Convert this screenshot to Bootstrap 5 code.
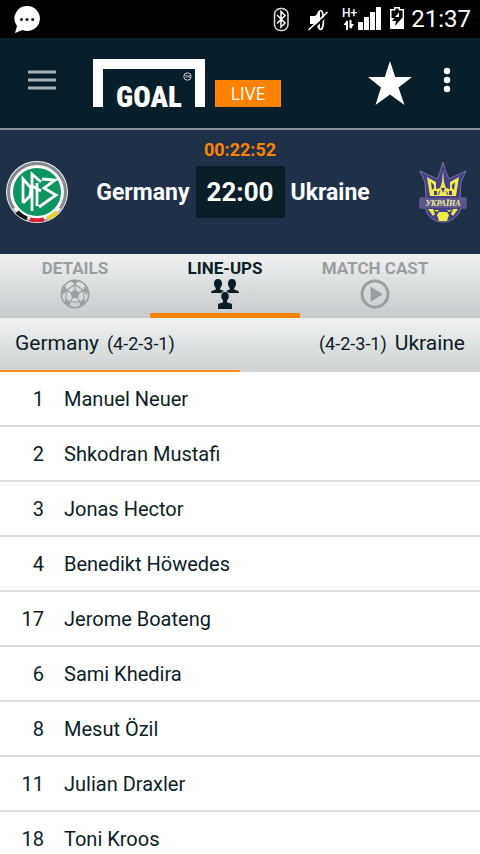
<!DOCTYPE html>
<html lang="en">
<head>
<meta charset="utf-8">
<meta name="viewport" content="width=device-width, initial-scale=1">
<title>Goal Live – Line-ups</title>
<link href="https://cdn.jsdelivr.net/npm/bootstrap@5.3.0/dist/css/bootstrap.min.css" rel="stylesheet">
<style>
  body { font-family: Roboto, "Noto Sans", sans-serif; color: #0a1e28; background: #fff; }
  svg { display: block; flex: none; }
  button { font: inherit; }
  .status-bar { height: 38px; background: #000; padding: 0 9px 0 14px; }
  .status-icons { gap: 6px; }
  .clock { font-size: 24px; line-height: 38px; }
  .app-bar { height: 92px; background: #081e2a; border-bottom: 2px solid #8b9299; padding: 0 25px 6px 28px; }
  .icon-btn { background: none; border: 0; padding: 0; color: #fff; }
  .fav { margin-right: 27px; }
  .brand { color: #fff; margin-left: 37px; gap: 10px; margin-top: 6px; }
  .goal-frame { width: 112px; height: 48px; border: 10px solid #fff; border-bottom: 0; position: relative; }
  .goal-word { font-family: "Roboto Condensed", Roboto, sans-serif; font-weight: 900; font-size: 29px; line-height: 20px; }
  .live-tag { background: #ff8200; font-family: "Open Sans", sans-serif; font-size: 18px; line-height: 27px; width: 66px; }
  .match { background: #1e3149; padding: 8px 6px 31px; }
  .timer { color: #ff8200; font-weight: 700; font-size: 18px; line-height: 23px; }
  .team { flex: 1 1 0; font-weight: 700; font-size: 23px; line-height: 28px; padding: 2px 6px 0; }
  .score { background: #0a1e28; width: 89px; font-weight: 700; font-size: 26px; line-height: 52px; }
  .tabs { background: linear-gradient(#eff1f1, #c6cacc); height: 64px; }
  .tab { flex: 0 0 150px; background: none; border: 0; border-bottom: 5px solid transparent; padding: 4px 0 0; color: #9b9fa1; font-weight: 700; font-size: 17px; line-height: 21px; }
  .tab.active { color: #0a1e28; border-color: #ff8200; }
  .sides { background: linear-gradient(#f0f2f2, #cdd1d2); }
  .side { background: none; border: 0; border-bottom: 2px solid #d4d6d7; padding: 0 15px; font-size: 21px; line-height: 51px; height: 54px; color: #0a1e28; gap: 8px; }
  .side.active { border-color: #ff8c1a; }
  .formation { font-size: 18px; }
  .list-group-flush > .player { height: 55px; border: 0; border-bottom: 2px solid #dcdcdc; padding: 0; gap: 20px; font-size: 20px; line-height: 55px; color: #0a1e28; }
  .shirt { width: 44px; }
</style>
</head>
<body>
<div class="vh-100 d-flex flex-column overflow-hidden">
  <div class="status-bar d-flex align-items-center justify-content-between text-white flex-shrink-0">
    <svg width="26" height="27" viewBox="0 0 26 27" aria-hidden="true"><path fill="#fff" d="M13.500 0a12.500 12.500 0 1 1-5 24L1 27l2-7A12.500 12.500 0 0 1 13.500 0z"/><g fill="#111"><circle cx="7.500" cy="13.500" r="1.500"/><circle cx="13" cy="13.500" r="1.500"/><circle cx="18.700" cy="13.500" r="1.500"/></g></svg>
    <div class="status-icons d-flex align-items-center">
      <svg width="110" height="38" viewBox="272 0 110 38" aria-hidden="true">
        <rect x="273.500" y="8.500" width="13.500" height="22" rx="6" fill="none" stroke="#ddd" stroke-width="1.500"/>
        <path d="M276 15l8 8-4 4V11.500l4 4-8 8" fill="none" stroke="#fff" stroke-width="1.500"/>
        <path d="M309 16h5l5-5v18l-5-5h-5z" fill="#fff"/>
        <ellipse cx="319.500" cy="20" rx="3" ry="9.500" fill="none" stroke="#fff" stroke-width="1.600"/>
        <path d="M309 31.500L327 14.500" stroke="#000" stroke-width="2"/><path d="M307.500 30L326.500 12" stroke="#fff" stroke-width="1.600"/>
        <text x="341" y="17" font-family="Roboto, sans-serif" font-weight="500" font-size="12" fill="#fff">H+</text>
        <path d="M346 21v9M349.500 20v8" stroke="#fff" stroke-width="2"/><path fill="#fff" d="M342.500 25L346 20v5zM353 24l-3.500 5.500V24z"/>
        <path fill="#fff" d="M357 22h5v8h-5zM363 17h5v13h-5zM369 12h5v18h-5zM375 7h5v23h-5z"/>
      </svg>
      <svg width="16" height="38" viewBox="390 0 16 38" aria-hidden="true"><path fill="none" stroke="#fff" stroke-width="1.500" d="M391.800 28.300V9.800h4V7.800h4.500v2h4v18.500z"/><path fill="#fff" d="M392 18h12v10h-12z"/><path fill="#000" d="M400.500 12l-7.500 9h4l-1 5 7-8h-4l2.500-6z"/><path fill="#fff" d="M400 12.500v4.500h-4z"/></svg>
      <span class="clock">21:37</span>
    </div>
  </div>

  <header class="app-bar d-flex align-items-center flex-shrink-0">
    <button class="icon-btn" type="button" aria-label="Menu"><svg width="28" height="22" viewBox="0 0 28 22"><path stroke="#a9b0b3" stroke-width="3" d="M0 3h28M0 11h28M0 19h28"/></svg></button>
    <a class="brand d-flex align-items-end text-decoration-none me-auto" href="#">
      <span class="goal-frame d-flex align-items-end justify-content-center"><span class="goal-word">GOAL</span>
        <svg class="position-absolute top-0 end-0" width="12" height="13" viewBox="0 -3 12 13" aria-hidden="true"><circle cx="4.500" cy="4.500" r="3.700" fill="none" stroke="#c8cfd2" stroke-width="1"/><path d="M2.200 3.500h2M3.200 3.500v2.500M5 6V3.500l.8 1.200.8-1.200V6" fill="none" stroke="#c8cfd2" stroke-width=".7"/></svg>
      </span>
      <span class="live-tag text-center">LIVE</span>
    </a>
    <button class="icon-btn fav" type="button" aria-label="Favourite"><svg width="44" height="50" viewBox="0 -6 44 50"><path fill="#fff" d="M22 0l5.200 16H44L30.500 26.500 36.500 44 22 33.500 7.500 44 13 26.500 0 16h16.800z"/></svg></button>
    <button class="icon-btn" type="button" aria-label="More options"><svg width="16" height="26" viewBox="0 0 16 26"><g fill="#fff"><circle cx="8" cy="4" r="3.200"/><circle cx="8" cy="13" r="3.200"/><circle cx="8" cy="22" r="3.200"/></g></svg></button>
  </header>

  <section class="match text-white flex-shrink-0">
    <div class="timer text-center">00:22:52</div>
    <div class="d-flex align-items-center">
      <svg width="62" height="62" viewBox="0 0 62 62" role="img" aria-label="Germany crest">
        <circle cx="31" cy="31" r="31" fill="#f4f6f5"/><circle cx="31" cy="31" r="28.500" fill="none" stroke="#85888c" stroke-width="3"/>
        <path d="M7 48l6-4h36l6 4a31 31 0 0 1-48 0z" fill="#f6f7f6"/>
        <circle cx="31" cy="31" r="25.500" fill="#fff"/><circle cx="31" cy="31" r="24" fill="#0b9660"/>
        <g fill="none" stroke-width="4"><path stroke="#111" d="M11 51q4 4 10 6.500"/><path stroke="#d92231" d="M24 58.500q7 1.500 14 0"/><path stroke="#e6cf2b" d="M41 57.500q6-2.500 10-6.500"/></g>
        <path fill="none" stroke="#fff" stroke-width="2.800" d="M17 42V18l8 9-1 8-7 7M26 50V13l9 8M31 45V22M26 25l9 5M36 18l13 1-11 8 12 7-17 12"/>
      </svg>
      <div class="team text-end">Germany</div>
      <div class="score text-center">22:00</div>
      <div class="team">Ukraine</div>
      <svg width="62" height="62" viewBox="0 0 62 62" role="img" aria-label="Ukraine crest">
        <path fill="#453e8c" stroke="#77759b" stroke-width="1" d="M31 1l3 10 3 7 4-2 13-6-5 11-1 16h6v10h-5a18.500 18.500 0 0 1-36 0H8V37h6l-1-16L8 10l13 6 4 2 3-7z"/>
        <path fill="#eeea4a" d="M15 16l9 5v7l4-1 2-6 1-12 1 12 2 6 4 1v-7l9-5-3 19H18z"/>
        <path fill="#453e8c" d="M19 21l3 3v3l-2 2zM43 21l-3 3v3l2 2zM22 30h3v4h-3zM37 30h3v4h-3zM29 27h4l-2 5z"/>
        <path fill="none" stroke="#453e8c" stroke-width="1" d="M26 34l2-4M36 34l-2-4"/>
        <path fill="#5c568f" d="M8 37h46v10H8z"/>
        <text x="31" y="44.500" text-anchor="middle" font-family="Liberation Serif, serif" font-weight="700" font-style="italic" font-size="8" fill="#f2ee9a">УКРАЇНА</text>
        <path fill="#eeea4a" d="M27 51h8l2 3-2 6h-8l-2-6zM16 48h5l2 5-2 2zM22 49h5l-2 2zM46 48h-5l-2 5 2 2zM40 49h-5l2 2z"/>
      </svg>
    </div>
  </section>

  <nav class="tabs d-flex overflow-hidden flex-shrink-0" role="tablist">
    <button class="tab d-flex flex-column align-items-center" type="button" role="tab">DETAILS
      <svg width="30" height="30" viewBox="0 0 30 30" aria-hidden="true"><circle cx="15" cy="15" r="13.700" fill="none" stroke="currentColor" stroke-width="1.600"/><path fill="currentColor" d="M15 10.500l4.500 3.300-1.700 5.200h-5.600l-1.700-5.200zM11 2h8l-4 3.500zM2 12l3-5 2 4-4 5zM28 12l-3-5-2 4 4 5zM5 24l.5-5 4.500 4 .5 4zM25 24l-.5-5-4.500 4-.5 4z"/><path fill="none" stroke="currentColor" stroke-width="1.100" d="M15 5v6M7 11l4 3M23 11l-4 3M12.500 19L10 23M17.500 19l2.500 4M7 11l8-5.500 8 5.500M7 11l-1.500 9M10 23h10M24.500 20L23 11"/></svg>
    </button>
    <button class="tab active d-flex flex-column align-items-center" type="button" role="tab" aria-selected="true">LINE-UPS
      <svg width="30" height="30" viewBox="0 0 30 30" aria-hidden="true"><g fill="currentColor"><path id="person" d="M8 0c2.800 0 4 1.800 4 4.500 0 2-.8 3.500-1.800 4.500v1.500l3.500 1.300c1 .5 1.300 1.200 1.300 2.200H1c0-1 .3-1.700 1.300-2.200l3.500-1.300V9C4.800 8 4 6.500 4 4.500 4 1.800 5.200 0 8 0z"/><use href="#person" x="14"/><path stroke="#d5d8d9" stroke-width="1" d="M15 12.500c3 0 4.200 1.800 4.200 4.500 0 2-.7 3.300-1.700 4.300V23l4 1.300c.8.300 1 1 1 1.700v5h-15v-5c0-.7.200-1.400 1-1.700l4-1.300v-1.700c-1-1-1.700-2.300-1.700-4.300 0-2.700 1.200-4.500 4.200-4.500z"/></g></svg>
    </button>
    <button class="tab d-flex flex-column align-items-center" type="button" role="tab">MATCH CAST
      <svg width="30" height="30" viewBox="0 0 30 30" aria-hidden="true"><circle cx="15" cy="15" r="13" fill="none" stroke="currentColor" stroke-width="3"/><path fill="currentColor" d="M10.500 7.500v15.500L23 15.200z"/></svg>
    </button>
  </nav>

  <div class="sides d-flex flex-shrink-0">
    <button class="side active w-50 d-flex align-items-baseline" type="button"><span>Germany</span><span class="formation">(4-2-3-1)</span></button>
    <button class="side w-50 d-flex align-items-baseline justify-content-end" type="button"><span class="formation">(4-2-3-1)</span><span>Ukraine</span></button>
  </div>

  <ul class="list-group list-group-flush overflow-hidden">
    <li class="list-group-item player d-flex flex-shrink-0"><span class="shirt text-end">1</span><span>Manuel Neuer</span></li>
    <li class="list-group-item player d-flex flex-shrink-0"><span class="shirt text-end">2</span><span>Shkodran Mustafi</span></li>
    <li class="list-group-item player d-flex flex-shrink-0"><span class="shirt text-end">3</span><span>Jonas Hector</span></li>
    <li class="list-group-item player d-flex flex-shrink-0"><span class="shirt text-end">4</span><span>Benedikt Höwedes</span></li>
    <li class="list-group-item player d-flex flex-shrink-0"><span class="shirt text-end">17</span><span>Jerome Boateng</span></li>
    <li class="list-group-item player d-flex flex-shrink-0"><span class="shirt text-end">6</span><span>Sami Khedira</span></li>
    <li class="list-group-item player d-flex flex-shrink-0"><span class="shirt text-end">8</span><span>Mesut Özil</span></li>
    <li class="list-group-item player d-flex flex-shrink-0"><span class="shirt text-end">11</span><span>Julian Draxler</span></li>
    <li class="list-group-item player d-flex flex-shrink-0"><span class="shirt text-end">18</span><span>Toni Kroos</span></li>
  </ul>
</div>
<script src="https://cdn.jsdelivr.net/npm/bootstrap@5.3.0/dist/js/bootstrap.bundle.min.js"></script>
</body>
</html>
